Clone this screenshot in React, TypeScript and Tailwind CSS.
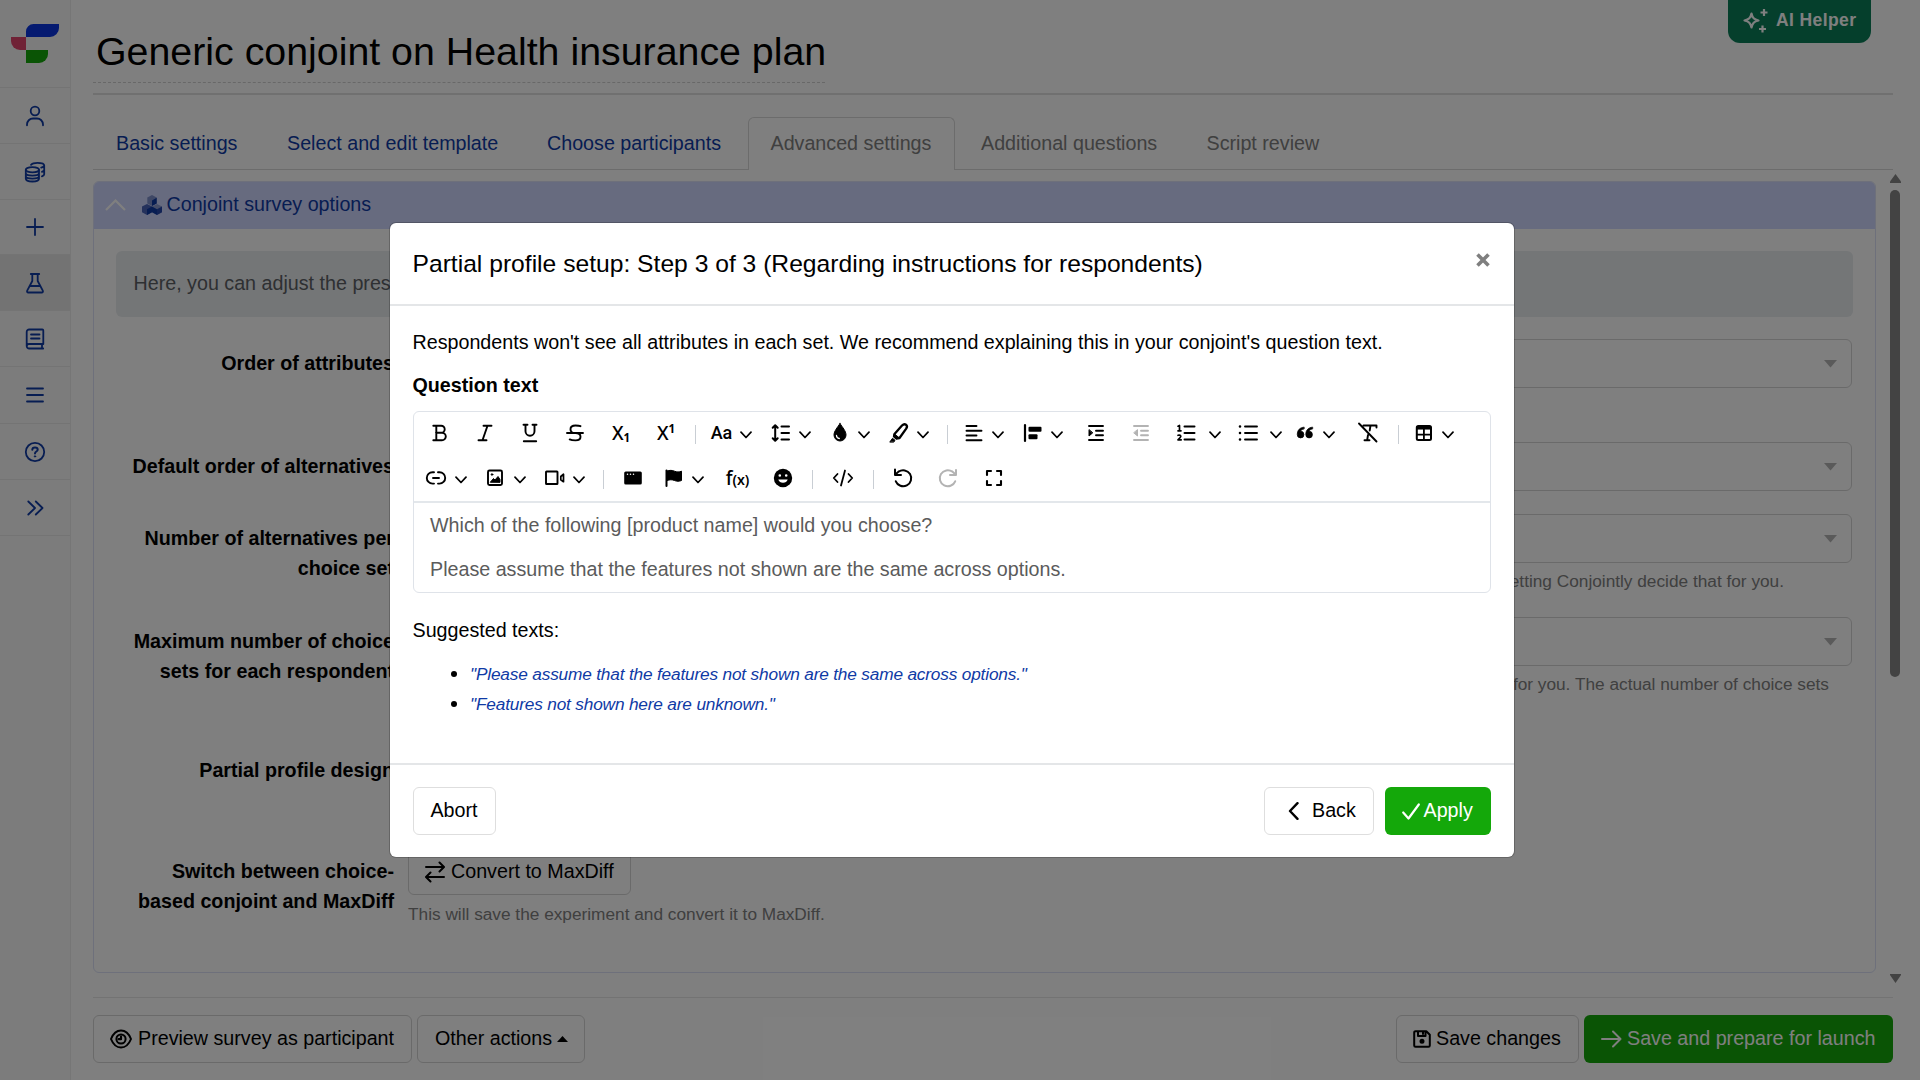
import React from "react";

type IconProps = { className?: string };

const line = {
  fill: "none",
  stroke: "currentColor",
  strokeWidth: 1.8,
  strokeLinecap: "round" as const,
  strokeLinejoin: "round" as const,
};

function Glyph({ children, className = "" }: { children: React.ReactNode; className?: string }) {
  return (
    <svg viewBox="0 0 24 24" className={`h-6 w-6 shrink-0 ${className}`} {...line}>
      {children}
    </svg>
  );
}

/* ---------- sidebar ---------- */

function Logo() {
  return (
    <svg viewBox="0 0 48 39" className="h-[39px] w-12">
      <path d="M22.500 0H48V4a9 9 0 0 1-9 9H15V7.500A7.500 7.500 0 0 1 22.500 0Z" fill="#0a35e0" />
      <path d="M0 13H15V26H9A9 9 0 0 1 0 17Z" fill="#e0456c" />
      <path d="M15 26H37V30a9 9 0 0 1-9 9H15Z" fill="#14a80a" />
    </svg>
  );
}

const UserIcon = () => (
  <Glyph>
    <circle cx="12" cy="7" r="4.300" />
    <path d="M4 21.300v-.8a6 6 0 0 1 6-6h4a6 6 0 0 1 6 6v.8" />
  </Glyph>
);
const DataIcon = () => (
  <Glyph>
    <ellipse cx="9.400" cy="9.800" rx="6.600" ry="2.600" />
    <path d="M2.800 9.800v9c0 1.500 3 2.700 6.600 2.700s6.600-1.200 6.600-2.700v-9M2.800 13c0 1.500 3 2.600 6.600 2.600S16 14.500 16 13M2.800 16c0 1.500 3 2.600 6.600 2.600S16 17.500 16 16" />
    <path d="M8 4.800c1-1.200 3.500-2 6.500-2 3.800 0 6.700 1.100 6.700 2.500 0 1.200-1.200 2-3 2.300M21.200 5.300v9c0 .9-.8 1.500-2.300 2M21.200 9.800c0 .9-1 1.600-2.300 2" />
  </Glyph>
);
const PlusIcon = () => (
  <Glyph>
    <path d="M12 4v16M4 12h16" />
  </Glyph>
);
const FlaskIcon = () => (
  <Glyph>
    <path d="M7.800 3h8.400M9.300 3v7L4.200 19.600c-.5 1 .1 1.900 1.100 1.900h13.400c1 0 1.600-.9 1.100-1.900L14.700 10V3M7 15h10" />
  </Glyph>
);
const BookIcon = () => (
  <Glyph>
    <path d="M20.300 17V3.500a1 1 0 0 0-1-1H6.200A2.500 2.500 0 0 0 3.700 5v14a2.500 2.500 0 0 0 2.500 2.500h14M3.800 19A2.200 2.200 0 0 1 6 17h14.300M19 17v4.500M8 7.500h8.500M8 11.500h8.500" />
  </Glyph>
);
const MenuIcon = () => (
  <Glyph>
    <path d="M4 5.500h16M4 12h16M4 18.500h16" />
  </Glyph>
);
const HelpIcon = () => (
  <Glyph>
    <circle cx="12" cy="12" r="9.200" />
    <path d="M9.300 9.800C9.300 8.300 10.500 7.400 12 7.400s2.700.9 2.700 2.300c0 1.700-2.700 1.900-2.700 3.700" strokeWidth="2" />
    <circle cx="12" cy="16.400" r=".7" fill="currentColor" strokeWidth="1" />
  </Glyph>
);
const DoubleChevron = () => (
  <Glyph>
    <path d="M5.300 5.500 12 12l-6.700 6.500M12.800 5.500l6.700 6.500-6.700 6.500" />
  </Glyph>
);

const nav = [
  { Icon: UserIcon, h: "h-14", active: false },
  { Icon: DataIcon, h: "h-14", active: false },
  { Icon: PlusIcon, h: "h-[55px]", active: false },
  { Icon: FlaskIcon, h: "h-14", active: true },
  { Icon: BookIcon, h: "h-14", active: false },
  { Icon: MenuIcon, h: "h-[57px]", active: false },
  { Icon: HelpIcon, h: "h-14", active: false },
  { Icon: DoubleChevron, h: "h-14", active: false },
];

function Sidebar() {
  return (
    <aside className="flex h-full w-[71px] shrink-0 flex-col border-r border-[#ececec] bg-[#f8f8f8] text-[#0f3aa5]">
      <div className="flex h-[88px] justify-end border-b border-[#e9e9e9] pt-6 pr-[11px]">
        <Logo />
      </div>
      {nav.map(({ Icon, h, active }, i) => (
        <div
          key={i}
          className={`flex items-center justify-center border-b border-[#e9e9e9] ${h} ${active ? "bg-[#e6e6e6]" : ""}`}
        >
          <Icon />
        </div>
      ))}
    </aside>
  );
}

/* ---------- page behind the dialog ---------- */

function Cubes() {
  return (
    <svg viewBox="0 0 20 20" className="h-5 w-5">
      <path d="M10 0l4.700 2.600v6L10 11 5.300 8.600v-6Z" fill="#7d8fcb" />
      <path d="M10 5.400l4.700-2.600v5.800L10 11Z" fill="#0f3aa5" />
      <path d="M5 9.100l5 2.500v5.600L5 20 0 17.200v-5.600Z" fill="#4a64b8" />
      <path d="M5 14.300l5-2.700v5.600L5 20Z" fill="#0f3aa5" />
      <path d="M15 9.100l5 2.500v5.600L15 20l-5-2.800v-5.600Z" fill="#8b9bd1" />
      <path d="M10 11.600l5 2.700V20l-5-2.800Z" fill="#0f3aa5" />
      <path d="M15 14.300l5-2.700v5.600L15 20Z" fill="#2547ab" />
    </svg>
  );
}

function Tabs() {
  return (
    <nav className="flex h-[53px] items-stretch whitespace-nowrap border-b border-[#d8d8d8] text-[#0f3aa5]">
      <span className="flex w-[171px] items-center pt-[2px] pl-[23px]">Basic settings</span>
      <span className="flex w-[260px] items-center pt-[2px] pl-[23px]">Select and edit template</span>
      <span className="flex w-[224px] items-center pt-[2px] pl-[23px]">Choose participants</span>
      <span className="-mb-px flex w-[207px] items-center rounded-t-[6px] border border-b-0 border-[#d8d8d8] bg-white pl-[21.500px] text-[#808080]">
        Advanced settings
      </span>
      <span className="flex w-[225px] items-center pt-[2px] pl-[26px] text-[#808080]">Additional questions</span>
      <span className="flex items-center pt-[2px] pl-[26.500px] text-[#808080]">Script review</span>
    </nav>
  );
}

function Select() {
  return (
    <div className="flex h-[49px] items-center justify-end rounded-[6px] border border-[#d4d4d4] pr-[14.500px]">
      <svg viewBox="0 0 13 8" className="h-2 w-[13px] text-[#b4b4b4]">
        <path d="M0 0h13L6.500 7.500Z" fill="currentColor" />
      </svg>
    </div>
  );
}

function Row({ h, label, children }: { h: string; label: React.ReactNode; children?: React.ReactNode }) {
  return (
    <div className={`flex shrink-0 ${h}`}>
      <div className="w-[278px] shrink-0 whitespace-nowrap pt-[10px] text-right font-bold">{label}</div>
      <div className="ml-[14px] w-[1444px]">{children}</div>
    </div>
  );
}

function Hint({ children, className = "" }: IconProps & { children: React.ReactNode }) {
  return (
    <p className={`whitespace-nowrap text-[17.250px] leading-[26px] text-[#808080] ${className}`}>{children}</p>
  );
}

function ConjointPanel() {
  return (
    <section className="flex h-[792px] w-[1783px] flex-col rounded-[6px] border border-[#dce1f6]">
      <header className="flex h-[47px] shrink-0 items-center rounded-t-[5px] bg-[#ced6fe] pb-[2px] pl-[11px] text-[#0f3aa5]">
        <svg viewBox="0 0 21 12" className="h-3 w-[21px]" fill="none" stroke="#fff" strokeWidth="2.200">
          <path d="M1 11 10.500 1.500 20 11" />
        </svg>
        <span className="ml-4">
          <Cubes />
        </span>
        <span className="ml-[4.500px]">Conjoint survey options</span>
      </header>
      <div className="flex flex-col pl-[22px]">
        <div className="mt-[22px] mb-[22px] h-[66px] w-[1737px] rounded-[6px] bg-[#e9ecef] pt-[18px] pl-[17.500px] text-[#5c6065]">
          Here, you can adjust the presentation
        </div>
        <Row h="h-[103px]" label="Order of attributes">
          <Select />
        </Row>
        <Row h="h-[72px]" label="Default order of alternatives">
          <Select />
        </Row>
        <Row
          h="h-[103px]"
          label={
            <>
              Number of alternatives per
              <br />
              choice set
            </>
          }
        >
          <Select />
          <Hint className="mt-[5px] pr-[68px] text-right">We recommend letting Conjointly decide that for you.</Hint>
        </Row>
        <Row
          h="h-[129px]"
          label={
            <>
              Maximum number of choice
              <br />
              sets for each respondent
            </>
          }
        >
          <Select />
          <Hint className="mt-[5px] pr-[23px] text-right">
            Conjointly can decide this for you. The actual number of choice sets
          </Hint>
        </Row>
        <Row h="h-[101px]" label="Partial profile design" />
        <Row
          h="h-[101px]"
          label={
            <>
              Switch between choice-
              <br />
              based conjoint and MaxDiff
            </>
          }
        >
          <div className="flex h-12 w-[223px] items-center whitespace-nowrap rounded-[6px] border border-[#d4d4d4] pt-[2px] pl-4">
            <svg viewBox="0 0 20 22" className="h-[22px] w-5" {...line} strokeWidth="2">
              <path d="M1 6h17.500M14.500 1.500 19 6l-4.500 4.500M19 16H1.500M5.500 11.500 1 16l4.500 4.500" />
            </svg>
            <span className="ml-[6px]">Convert to MaxDiff</span>
          </div>
          <Hint className="mt-[6px]">This will save the experiment and convert it to MaxDiff.</Hint>
        </Row>
      </div>
    </section>
  );
}

function Scrollbar() {
  return (
    <div className="flex h-[816px] w-[10px] flex-col items-center text-[#868686]">
      <svg viewBox="0 0 11 9" className="mt-[4px] h-[9px] w-[11px]">
        <path d="M5.500 0 11 7.500V9H0V7.500Z" fill="currentColor" />
      </svg>
      <div className="mt-[7px] h-[487px] w-[10px] rounded-full bg-[#868686]" />
      <svg viewBox="0 0 11 9" className="mt-auto mb-[3px] h-[9px] w-[11px]">
        <path d="M5.500 9 11 1V0H0V1Z" fill="currentColor" />
      </svg>
    </div>
  );
}

function FooterBar() {
  return (
    <footer className="flex h-[66px] w-[1800px] whitespace-nowrap border-t border-[#e6e6e6] pt-[17px]">
      <div className="flex h-12 w-[319px] items-center rounded-[6px] border border-[#d4d4d4] pl-4">
        <svg viewBox="0 0 22 20" className="h-5 w-[22px]" {...line} strokeWidth="2">
          <path d="M1 10C3 5 6.500 1.500 11 1.500S19 5 21 10c-2 5-5.500 8.500-10 8.500S3 15 1 10Z" />
          <circle cx="11" cy="10" r="4.600" />
          <path d="M11 7.600v2.600H8.600" strokeWidth="2.200" />
        </svg>
        <span className="ml-[6px]">Preview survey as participant</span>
      </div>
      <div className="ml-[5px] flex h-12 w-[168px] items-center rounded-[6px] border border-[#d4d4d4] pl-[17px]">
        Other actions
        <svg viewBox="0 0 11 6" className="mb-px ml-[5px] h-[6px] w-[11px]">
          <path d="M0 6h11L5.500 0Z" fill="currentColor" />
        </svg>
      </div>
      <div className="ml-auto flex h-12 w-[183px] items-center rounded-[6px] border border-[#d4d4d4] pl-[16px]">
        <svg viewBox="0 0 18 18" className="h-[18px] w-[18px]" {...line} strokeWidth="2">
          <path d="M1.200 2.500A1.300 1.300 0 0 1 2.500 1.200h10.800l3.500 3.500v10.800a1.300 1.300 0 0 1-1.300 1.300h-13a1.300 1.300 0 0 1-1.300-1.300ZM5 1.500V6h7.500V1.500M10 2v2" />
          <circle cx="9" cy="11.200" r="1.500" fill="currentColor" />
        </svg>
        <span className="ml-[5px]">Save changes</span>
      </div>
      <div className="ml-[5px] flex h-12 w-[309px] items-center rounded-[6px] bg-[#14a80a] pl-[17px] text-white">
        <svg viewBox="0 0 21 18" className="h-[18px] w-[21px]" {...line} strokeWidth="2">
          <path d="M1 9h18.500M12 1.500 19.500 9 12 16.500" />
        </svg>
        <span className="ml-[5px]">Save and prepare for launch</span>
      </div>
    </footer>
  );
}

function AiHelper() {
  return (
    <div className="absolute top-0 left-[1728px] flex h-[43px] w-[143px] items-center whitespace-nowrap rounded-b-[12px] bg-[#0a7f59] pb-px pl-[14px] text-white">
      <svg viewBox="0 0 27 26" className="h-[26px] w-[27px]" {...line} strokeWidth="2.200" strokeLinecap="butt">
        <path d="M9.500 5.500c1 4.500 2.500 6 7 7-4.500 1-6 2.500-7 7-1-4.500-2.500-6-7-7 4.500-1 6-2.500 7-7Z" />
        <path d="M22 1v7M18.500 4.500h7M20.500 17.500v7M17 21h7" />
      </svg>
      <span className="ml-[7px] text-[17.500px] font-bold tracking-[.4px]">AI Helper</span>
    </div>
  );
}

/* ---------- editor toolbar ---------- */

function Chevron() {
  return (
    <svg viewBox="0 0 12 8" className="mt-1 h-2 w-3 shrink-0" {...line} strokeWidth="1.700">
      <path d="M1 1.200 6 6.500 11 1.200" />
    </svg>
  );
}
function Sep() {
  return <span className="mt-[3px] h-[19px] w-px shrink-0 bg-[#c9ced4]" />;
}
function TextGlyph({ children, className = "" }: IconProps & { children: React.ReactNode }) {
  return (
    <span className={`flex h-6 w-6 shrink-0 items-center justify-center whitespace-nowrap leading-none ${className}`}>
      {children}
    </span>
  );
}

const icons: Record<string, React.ReactNode> = {
  bold: (
    <Glyph>
      <path d="M5.300 4.700h7.900a3.500 3.500 0 0 1 0 7H8M8 11.700h6a3.800 3.800 0 0 1 0 7.600H5.300M8.300 4.700v14.600" strokeWidth="1.900" />
    </Glyph>
  ),
  italic: (
    <Glyph>
      <path d="M10.500 4.700h8M5.500 19.300h8M14.500 4.700l-5 14.600" strokeWidth="1.900" />
    </Glyph>
  ),
  underline: (
    <Glyph>
      <path d="M5.500 3.700h4M14.500 3.700h4M7.500 3.700v6.500a4.500 4.500 0 0 0 9 0V3.700M5.800 20.200h12.400" strokeWidth="1.900" />
    </Glyph>
  ),
  strike: (
    <Glyph>
      <path d="M17.500 5.200c-1-.5-2.500-.7-5-.7-3.500 0-5 1.400-5 3.700S9 12 12 12h.5c3 0 5 1.300 5 3.700 0 2.400-2 3.700-5 3.700-2.500 0-4.300-.2-5.800-1M4 12h16" strokeWidth="1.900" />
    </Glyph>
  ),
  sub: (
    <TextGlyph className="font-['Noto_Sans'] text-[19px] font-medium">
      X<span className="mt-[9px] text-[11.500px] font-bold">1</span>
    </TextGlyph>
  ),
  sup: (
    <TextGlyph className="font-['Noto_Sans'] text-[19px] font-medium">
      X<span className="-mt-[9px] text-[11.500px] font-bold">1</span>
    </TextGlyph>
  ),
  font: <TextGlyph className="font-['Roboto'] text-[18px] font-medium">Aa</TextGlyph>,
  lineheight: (
    <Glyph>
      <path d="M6.200 5v14M3.700 6.800 6.200 4.300l2.500 2.500M3.700 17.200l2.500 2.500 2.500-2.500M12.500 5.500H20M12.500 12H20M12.500 18.500H20" strokeWidth="2" />
    </Glyph>
  ),
  drop: (
    <Glyph>
      <path d="M12 2.500c2.500 4 6 7.500 6 11.500a6 6 0 0 1-12 0c0-4 3.500-7.500 6-11.500Z" fill="currentColor" strokeWidth="1" />
      <path d="M8.500 14.500a3.300 3.300 0 0 0 2.800 3" stroke="#fff" strokeWidth="1.300" />
    </Glyph>
  ),
  brush: (
    <Glyph>
      <path d="M7.500 13 15 4.500c1.500-1.500 3-1.500 4-.8 1.300 1 1.200 2.500.2 4L12.500 17l-3.200.5L7 15.500Z" strokeWidth="2.300" />
      <path d="m7.500 13 5 4-3.200.7L7 15.700ZM3 20.800l2.500-3.500 2.500 2-1 1.500Z" fill="currentColor" strokeWidth="1" />
    </Glyph>
  ),
  align: (
    <Glyph>
      <path d="M4.500 5h10M4.500 9.800h15M4.500 14.500h10M4.500 19.200h15" strokeWidth="1.900" />
    </Glyph>
  ),
  alignblock: (
    <Glyph>
      <path d="M4 4v16" strokeWidth="2.200" />
      <rect x="7.500" y="5.700" width="13" height="5" rx="1" fill="currentColor" stroke="none" />
      <rect x="7.500" y="13.300" width="9" height="5" rx="1" fill="currentColor" stroke="none" />
    </Glyph>
  ),
  indent: (
    <Glyph>
      <path d="M5 5h14M12 9.700h7M12 14.300h7M5 19h14" strokeWidth="1.900" />
      <path d="M5 9v6l3.500-3Z" fill="currentColor" strokeWidth="1" />
    </Glyph>
  ),
  outdent: (
    <Glyph className="text-[#b3b3b3]">
      <path d="M5 5h14M12 9.700h7M12 14.300h7M5 19h14" strokeWidth="1.900" />
      <path d="M8.500 9v6L5 12Z" fill="currentColor" strokeWidth="1" />
    </Glyph>
  ),
  numlist: (
    <Glyph>
      <path d="M10.500 5.500h10M10.500 12h10M10.500 18.500h10" strokeWidth="2" />
      <path d="M4 5.200 5.500 4.500V9.800M4 9.800h3M4 14.300c2.500-.8 3.500.8 2.200 2.200L4 18.800h3.200" strokeWidth="1.700" />
    </Glyph>
  ),
  bullist: (
    <Glyph>
      <path d="M9 5.500h12M9 12h12M9 18.500h12" strokeWidth="1.900" />
      <path d="M4 5.500h.01M4 12h.01M4 18.500h.01" strokeWidth="2.600" />
    </Glyph>
  ),
  quote: (
    <Glyph>
      <path
        d="M10.800 6.200C7 6.500 4.300 9 4.300 13.500a3.300 3.300 0 1 0 3.300-3.200c.3-1.200 1.500-2 3.200-2.300ZM19.300 6.200c-3.800.3-6.500 2.800-6.500 7.300a3.300 3.300 0 1 0 3.300-3.200c.3-1.200 1.500-2 3.200-2.300Z"
        fill="currentColor"
        strokeWidth=".8"
      />
    </Glyph>
  ),
  clear: (
    <Glyph>
      <path d="M7.500 4.500h13M20.500 4.500v2M14.500 4.500l-.8 5M12 14l-.8 5M8.500 19.300h5M3 2.500l17.500 18" strokeWidth="1.900" />
    </Glyph>
  ),
  table: (
    <Glyph>
      <rect x="4.800" y="5" width="14.200" height="14" rx="1.500" strokeWidth="2" />
      <path d="M4.800 6.800h14.200" strokeWidth="3.500" strokeLinecap="butt" />
      <path d="M4.800 13.700h14.200M11.900 8v11" strokeWidth="1.800" strokeLinecap="butt" />
    </Glyph>
  ),
  link: (
    <Glyph>
      <path d="M10 6.200H8.500a5.700 5.700 0 0 0 0 11.400H10M14 6.200h1.500a5.700 5.700 0 0 1 0 11.400H14M9 12h6" strokeWidth="1.900" />
    </Glyph>
  ),
  image: (
    <Glyph>
      <rect x="5" y="4.500" width="14" height="14.500" rx="1.500" strokeWidth="1.900" />
      <path d="m7.500 16 3-3.500 1.500 1.500 3-3.500 2 3V16Z" fill="currentColor" strokeWidth="1" />
      <circle cx="9" cy="8.500" r=".8" fill="currentColor" strokeWidth="1" />
    </Glyph>
  ),
  video: (
    <Glyph>
      <rect x="3" y="5.500" width="11.500" height="12.500" rx=".6" strokeWidth="1.900" />
      <path d="m17.800 10.500 2.700-2.300v7.500l-2.700-2Z" strokeWidth="1.700" />
    </Glyph>
  ),
  window: (
    <Glyph>
      <rect x="3.200" y="5.500" width="17.600" height="13" rx="1.500" fill="currentColor" stroke="none" />
      <path d="M6.500 8.300h.01M9.500 8.300h.01M12.500 8.300h.01" stroke="#fff" strokeWidth="1.500" />
    </Glyph>
  ),
  flag: (
    <Glyph>
      <path d="M4.500 4.500V20" strokeWidth="2" />
      <path d="M5 5c3-1 5-.8 7.500.2s4.500 1 7 0v9.300c-2.500 1-4.500 1-7 0s-4.500-1-7.500 0Z" fill="currentColor" strokeWidth="1" />
    </Glyph>
  ),
  fx: (
    <TextGlyph className="font-['Noto_Sans'] text-[19px] font-medium">
      f<span className="mt-[3px] text-[14px] font-semibold">(x)</span>
    </TextGlyph>
  ),
  smile: (
    <Glyph>
      <circle cx="12" cy="12" r="9.200" fill="currentColor" stroke="none" />
      <path d="M8.800 9.500h.01M15.200 9.500h.01" stroke="#fff" strokeWidth="2.600" />
      <path d="M7.300 13.500a5 5 0 0 0 9.400 0Z" fill="#fff" stroke="none" />
    </Glyph>
  ),
  code: (
    <Glyph>
      <path d="M6.500 8 2.800 12l3.700 4M17.500 8l3.700 4-3.700 4M14 4.500l-4 15" strokeWidth="1.800" />
    </Glyph>
  ),
  undo: (
    <Glyph>
      <path d="M7.500 5.800a8 8 0 1 1-2.700 9.500M4 3.500v5.500h6M4 8.800 8 5.300" strokeWidth="2" />
    </Glyph>
  ),
  redo: (
    <Glyph className="text-[#b3b3b3]">
      <path d="M16.500 5.800a8 8 0 1 0 2.700 9.500M20 4v5h-6M20 8.800l-4-3.500" strokeWidth="2" />
    </Glyph>
  ),
  full: (
    <Glyph>
      <path d="M5 9V5h4M15 5h4v4M19 15v4h-4M9 19H5v-4" strokeWidth="2.100" />
    </Glyph>
  ),
  chevron: <Chevron />,
  sep: <Sep />,
};

const toolsTop: [string, string][] = [
  ["bold", "ml-[14.5px]"],
  ["italic", "ml-[20.5px]"],
  ["underline", "ml-[21px]"],
  ["strike", "ml-[21.5px]"],
  ["sub", "ml-[22px]"],
  ["sup", "ml-[21px]"],
  ["sep", "ml-[16.5px]"],
  ["font", "ml-[14px]"],
  ["chevron", "ml-[6.5px]"],
  ["lineheight", "ml-[16.5px]"],
  ["chevron", "ml-[6.5px]"],
  ["drop", "ml-[16.5px]"],
  ["chevron", "ml-[6.5px]"],
  ["brush", "ml-[16.5px]"],
  ["chevron", "ml-[6.5px]"],
  ["sep", "ml-[17.5px]"],
  ["align", "ml-[14px]"],
  ["chevron", "ml-[6px]"],
  ["alignblock", "ml-[17px]"],
  ["chevron", "ml-[6.5px]"],
  ["indent", "ml-[20.5px]"],
  ["outdent", "ml-[21px]"],
  ["numlist", "ml-[21.5px]"],
  ["chevron", "ml-[11px]"],
  ["bullist", "ml-[14.5px]"],
  ["chevron", "ml-[10.5px]"],
  ["quote", "ml-[10.5px]"],
  ["chevron", "ml-[6px]"],
  ["clear", "ml-[21px]"],
  ["sep", "ml-[18px]"],
  ["table", "ml-[13.5px]"],
  ["chevron", "ml-[6px]"],
];

const toolsBottom: [string, string][] = [
  ["link", "ml-[10.5px]"],
  ["chevron", "ml-[6.5px]"],
  ["image", "ml-[16.5px]"],
  ["chevron", "ml-[6.5px]"],
  ["video", "ml-[17.5px]"],
  ["chevron", "ml-[5.5px]"],
  ["sep", "ml-[18px]"],
  ["window", "ml-[17.5px]"],
  ["flag", "ml-[17px]"],
  ["chevron", "ml-[6px]"],
  ["fx", "ml-[21.5px]"],
  ["smile", "ml-[21px]"],
  ["sep", "ml-[17px]"],
  ["code", "ml-[18px]"],
  ["sep", "ml-[18px]"],
  ["undo", "ml-[17px]"],
  ["redo", "ml-[21px]"],
  ["full", "ml-[22px]"],
];

function ToolRow({ tools }: { tools: [string, string][] }) {
  return (
    <div className="flex h-[45px] items-center pb-[3px]">
      {tools.map(([name, gap], i) => (
        <span key={i} className={`flex shrink-0 ${gap}`}>
          {icons[name]}
        </span>
      ))}
    </div>
  );
}

function Editor() {
  return (
    <div className="h-[182px] rounded-[6px] border border-[#dfe3e9]">
      <div className="h-[91px] border-b-2 border-[#e3e7eb]">
        <ToolRow tools={toolsTop} />
        <ToolRow tools={toolsBottom} />
      </div>
      <div className="pt-[8px] pl-[16.500px] text-[#5b5b5b]">
        <p>Which of the following [product name] would you choose?</p>
        <p className="mt-[14.500px]">Please assume that the features not shown are the same across options.</p>
      </div>
    </div>
  );
}

function Dialog() {
  return (
    <div className="flex h-[634px] w-[1123.500px] flex-col rounded-[6px] bg-white shadow-[0_0_0_1px_rgba(0,0,0,0.2)]">
      <div className="flex h-[83px] shrink-0 items-center justify-between whitespace-nowrap border-b-2 border-[#e4e6e8] pr-[24px] pl-[22.500px] text-[24.650px]">
        <h2>Partial profile setup: Step 3 of 3 (Regarding instructions for respondents)</h2>
        <svg viewBox="0 0 14 14" className="mb-[7px] h-[14px] w-[14px]" fill="none" stroke="#7f7f7f" strokeWidth="3.600">
          <path d="M1.500 1.500l11 11M12.500 1.500l-11 11" />
        </svg>
      </div>
      <div className="h-[457px] whitespace-nowrap px-[22.500px] pt-[22px]">
        <p>Respondents won't see all attributes in each set. We recommend explaining this in your conjoint's question text.</p>
        <p className="mt-[13.500px] mb-[10.500px] font-bold">Question text</p>
        <Editor />
        <p className="mt-[23px]">Suggested texts:</p>
        <ul className="mt-[13px] list-disc pl-[57.500px]">
          <li>
            <span className="text-[17.250px] tracking-[-0.175px] italic text-[#0f3aa5]">
              "Please assume that the features not shown are the same across options."
            </span>
          </li>
          <li>
            <span className="text-[17.250px] tracking-[-0.175px] italic text-[#0f3aa5]">
              "Features not shown here are unknown."
            </span>
          </li>
        </ul>
      </div>
      <div className="flex flex-1 items-start border-t-2 border-[#e4e6e8] px-[22.500px] pt-[22px]">
        <button className="h-12 w-[83px] rounded-[6px] border border-[#dedede]">Abort</button>
        <button className="ml-auto flex h-12 w-[110px] items-center rounded-[6px] border border-[#dedede] pl-[22.500px]">
          <svg viewBox="0 0 11 18" className="h-[18px] w-[11px]" {...line} strokeWidth="2.400">
            <path d="M9.500 1.200 2 9l7.500 7.800" />
          </svg>
          <span className="ml-[13.500px]">Back</span>
        </button>
        <button className="ml-[11px] flex h-12 w-[106px] items-center rounded-[6px] bg-[#14a80a] pl-[16.500px] text-white">
          <svg viewBox="0 0 18 17" className="h-[17px] w-[18px]" {...line} strokeWidth="2.200">
            <path d="m1.200 9.500 5.300 6L16.800 1.500" />
          </svg>
          <span className="ml-[4px]">Apply</span>
        </button>
      </div>
    </div>
  );
}

export default function App() {
  return (
    <div className="relative h-[1080px] w-[1920px] overflow-hidden bg-white font-['Liberation_Sans',Arial,sans-serif] text-[19.700px] leading-[29.500px] text-black">
      <div className="flex h-full">
        <Sidebar />
        <main className="flex flex-col pl-[22px]">
          <div className="flex h-[83px] items-start">
            <h1 className="h-[83px] w-[732px] whitespace-nowrap border-b border-dashed border-[#d0d0d0] pt-[22px] pl-[3px] text-[39.350px] leading-[59px]">
              Generic conjoint on Health insurance plan
            </h1>
          </div>
          <hr className="mt-[10px] h-[2px] w-[1800px] border-0 bg-[#e0e0e0]" />
          <div className="mt-[22px] w-[1800px]">
            <Tabs />
          </div>
          <div className="flex h-[827px]">
            <div className="pt-[11px]">
              <ConjointPanel />
            </div>
            <div className="ml-[14px]">
              <Scrollbar />
            </div>
          </div>
          <FooterBar />
        </main>
      </div>
      <AiHelper />
      <div className="absolute inset-0 bg-black/50 pt-[223px] pl-[390px]">
        <Dialog />
      </div>
    </div>
  );
}
